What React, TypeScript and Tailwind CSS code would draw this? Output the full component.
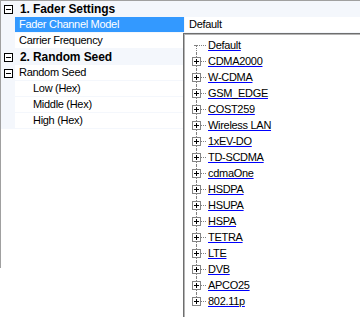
import React from 'react';

type GridRow = {
    label: string;
    kind: 'cat' | 'prop' | 'sub';
    expand?: boolean;
    selected?: boolean;
    value?: string;
};

const gridRows: GridRow[] = [
    { label: '1. Fader Settings', kind: 'cat' },
    { label: 'Fader Channel Model', kind: 'prop', selected: true, value: 'Default' },
    { label: 'Carrier Frequency', kind: 'prop' },
    { label: '2. Random Seed', kind: 'cat' },
    { label: 'Random Seed', kind: 'prop', expand: true },
    { label: 'Low (Hex)', kind: 'sub' },
    { label: 'Middle (Hex)', kind: 'sub' },
    { label: 'High (Hex)', kind: 'sub' },
];

const models = [
    'Default', 'CDMA2000', 'W-CDMA', 'GSM_EDGE', 'COST259', 'Wireless LAN', '1xEV-DO', 'TD-SCDMA',
    'cdmaOne', 'HSDPA', 'HSUPA', 'HSPA', 'TETRA', 'LTE', 'DVB', 'APCO25', '802.11p',
];

const MinusBox = () => (
    <svg width="9" height="9" viewBox="0 0 9 9" className="block">
        <rect x="0.5" y="0.5" width="8" height="8" fill="white" stroke="#000" />
        <path d="M2 4.5h5" stroke="#000" />
    </svg>
);

const PlusBox = () => (
    <svg width="9" height="9" viewBox="0 0 9 9" className="block">
        <rect x="0.5" y="0.5" width="8" height="8" fill="white" stroke="#848484" />
        <path d="M2 4.5h5M4.5 2v5" stroke="#000" />
    </svg>
);

const PropertyGrid = () => (
    <div className="h-[268px] border-l border-t border-[#a0a0a0]">
        {gridRows.map((row) =>
            row.kind === 'cat' ? (
                <div key={row.label} className="flex h-[16px] items-center bg-[#f4f7fc]">
                    <div className="flex w-[14px] justify-center pl-[1px]">
                        <MinusBox />
                    </div>
                    <span className="pl-[5px] text-[12px] font-bold tracking-[-0.1px] text-black">{row.label}</span>
                </div>
            ) : (
                <div key={row.label} className="flex h-[16px]">
                    <div className="flex w-[14px] items-center justify-center bg-[#f4f7fc] pl-[1px]">
                        {row.expand && <MinusBox />}
                    </div>
                    <div
                        className={`w-[169px] border-b border-[#f4f7fc] leading-[15px] tracking-[-0.3px] ${
                            row.kind === 'sub' ? 'pl-[18px]' : 'pl-[4px]'
                        } ${row.selected ? 'bg-[#3399ff] text-white' : 'text-black'}`}
                    >
                        {row.label}
                    </div>
                    <div className="flex-1 border-b border-l border-[#f4f7fc] pl-[4px] leading-[15px] tracking-[-0.3px] text-black">
                        {row.value}
                    </div>
                </div>
            )
        )}
    </div>
);

const ModelDropdown = () => (
    <div className="absolute left-[183px] top-[33px] h-[300px] w-[200px] border border-[#6e6e6e] bg-white">
        <div className="h-full border border-[#b4b4b4] pt-[2px]">
            {models.map((name, i) => {
                const first = i === 0;
                const last = i === models.length - 1;
                return (
                    <div key={name} className="relative flex h-[16px] items-center">
                        {/* tree connector lines */}
                        <div
                            className={`absolute left-[11px] w-0 border-l border-dotted border-[#808080] ${
                                first ? 'top-[8px] bottom-0' : last ? 'top-0 h-[8px]' : 'top-0 bottom-0'
                            }`}
                        />
                        <div
                            className={`absolute top-[8px] h-0 border-t border-dotted border-[#808080] ${
                                first ? 'left-[9px] w-[12px]' : 'left-[15px] w-[6px]'
                            }`}
                        />
                        {!first && (
                            <div className="absolute left-[7px] top-[4px]">
                                <PlusBox />
                            </div>
                        )}
                        <span className="ml-[23px] leading-[16px] tracking-[-0.3px] text-black underline decoration-[#0000ff] underline-offset-[1px]">
                            {name}
                        </span>
                    </div>
                );
            })}
        </div>
    </div>
);

export default function App() {
    return (
        <div className="relative h-[317px] w-[360px] overflow-hidden bg-white font-['Liberation_Sans',Arial,sans-serif] text-[11px]">
            <PropertyGrid />
            <ModelDropdown />
        </div>
    );
}
